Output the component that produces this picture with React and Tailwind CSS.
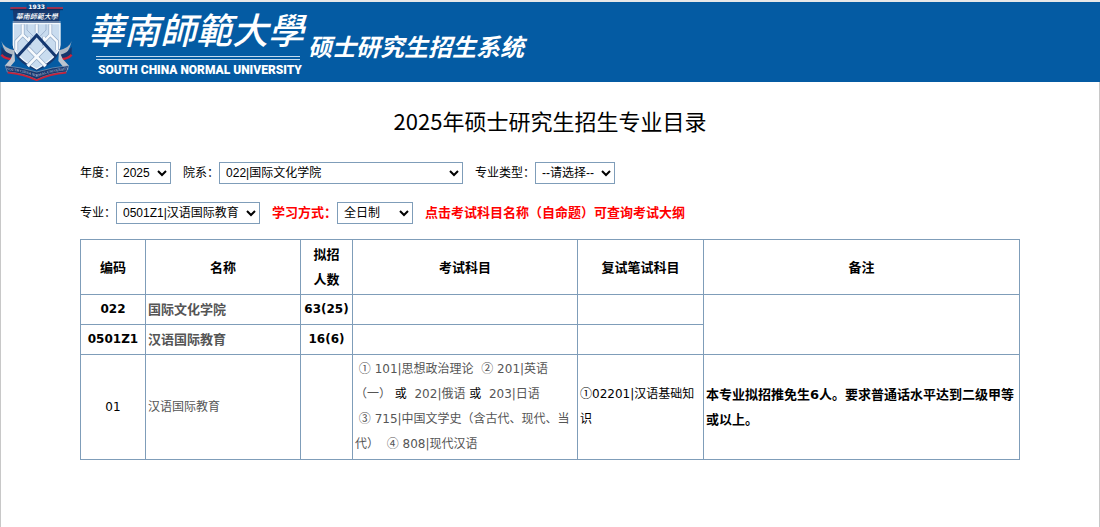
import { useState } from 'react';

const years = ['2025', '2024', '2023'];
const departments = ['022|国际文化学院'];
const majorTypes = ['--请选择--', '学术学位', '专业学位'];
const majors = ['0501Z1|汉语国际教育'];
const studyModes = ['全日制', '非全日制'];

const summaryRows = [
    { code: '022', name: '国际文化学院', quota: '63(25)' },
    { code: '0501Z1', name: '汉语国际教育', quota: '16(6)' },
];

const cell = 'border border-[#7f9db9] p-[2px]';

const Crest = () => (
    <svg viewBox="0 6 240 240" className="h-20 w-20 shrink-0" role="img" aria-label="校徽">
        <path d="M38 24 L181 24 L178 60 L181 140 Q178 185 110 212 Q42 185 38 140 L41 60 Z" fill="#173a70" />
        <path d="M31 24 H80 M140 24 H189" stroke="#c62a3e" strokeWidth="5" />
        <path d="M31 29 H189" stroke="#102c5c" strokeWidth="3" />
        <rect x="80" y="11" width="60" height="16" fill="#0d4c8c" />
        <text x="110" y="26" textAnchor="middle" fontSize="18" fontWeight="700" fill="#fff" fontFamily="DejaVu Sans, sans-serif">1933</text>
        <text x="110" y="57" textAnchor="middle" fontSize="21" fontStyle="italic" fontWeight="500" fill="#fff" fontFamily="Noto Sans CJK TC, sans-serif">華南師範大學</text>
        <path d="M38 66 H182" stroke="#c4d2e3" strokeWidth="3" />
        <path d="M40 71 H180 V135 Q178 168 110 207 Q42 168 40 135 Z" fill="#c9dcef" stroke="#f5f9fd" strokeWidth="4" />
        <g fill="none" strokeLinejoin="miter">
            <path d="M68 73 V104 L49 124 V150 M68 104 L88 124 V110 M110 73 V99 M151 73 V104 L132 124 V110 M151 104 L171 124 V150" stroke="#8fa7c5" strokeWidth="11" />
            <path d="M68 73 V104 L49 124 V150 M68 104 L88 124 V110 M110 73 V99 M151 73 V104 L132 124 V110 M151 104 L171 124 V150" stroke="#f7fafd" strokeWidth="7" />
            <path d="M81 73 V90 L99 108 M138 73 V90 L121 108" stroke="#9fb4d0" strokeWidth="3" />
            <path d="M53 169 L110 106 L167 169" stroke="#14376f" strokeWidth="9" />
            <path d="M84 144 L137 198 M136 144 L83 198" stroke="#8fa7c5" strokeWidth="12" />
            <path d="M84 144 L137 198 M136 144 L83 198" stroke="#f7fafd" strokeWidth="8" />
        </g>
        <path d="M4 123 Q10 143 43 151 L39 177 Q12 160 4 123 Z M215 123 Q209 143 177 151 L181 177 Q207 160 215 123 Z" fill="#aeb8c4" />
        <path d="M4 140 Q15 158 39 164 L34 181 Q12 178 4 164 Z M215 140 Q204 158 181 164 L186 181 Q207 178 215 164 Z" fill="#17376c" />
        <path d="M4 164 Q15 177 38 177 M215 164 Q204 177 182 177" stroke="#cb2138" strokeWidth="7" fill="none" />
        <path d="M14 197 L32 177 L43 151 L45 183 L28 203 Z M207 197 L188 177 L177 151 L175 183 L192 203 Z" fill="#bcc5cf" />
        <path d="M16 197 Q60 201 110 216 Q158 201 206 197 L199 216 Q150 219 110 239 Q70 219 22 216 Z" fill="#17376c" stroke="#8fa0b8" strokeWidth="2" />
        <path d="M23 218 Q70 222 110 241 Q150 222 199 218" fill="none" stroke="#c8233a" strokeWidth="5" />
        <path id="crest-ribbon" d="M20 210 Q65 214 110 231 Q155 214 203 210" fill="none" />
        <text fontSize="11" fill="#d5dce6" fontFamily="Liberation Serif, serif">
            <textPath href="#crest-ribbon">SOUTH CHINA NORMAL UNIVERSITY</textPath>
        </text>
    </svg>
);

const Field = ({ id, label, options, width, important }) => {
    const [value, setValue] = useState(options[0]);
    return (
        <div className="flex items-center">
            <label htmlFor={id} className={important ? 'text-[13px] font-bold text-[#f00]' : 'text-xs'}>{label}</label>
            <select
                id={id}
                value={value}
                onChange={e => setValue(e.target.value)}
                className={`${width} h-[22px] border border-[#7f9db9] bg-white pl-[2px] font-['Liberation_Sans','Noto_Sans_CJK_SC',sans-serif] text-xs`}
            >
                {options.map(option => <option key={option}>{option}</option>)}
            </select>
        </div>
    );
};

const Mark = ({ children }) => <span className="font-['Noto_Sans_CJK_SC',sans-serif] leading-none">{children}</span>;

const Subject = ({ mark, children }) => (
    <a href="#syllabus" className="text-[#555]">
        {mark && <><Mark>{mark}</Mark>{' '}</>}
        {children}
    </a>
);

const App = () => {
    return (
        <div className="flex min-h-screen flex-col bg-white font-['DejaVu_Sans','Noto_Sans_CJK_SC',sans-serif] text-xs text-black">
            <header className="flex border-t-2 border-[#e8e8e8] bg-[#045ba3] whitespace-nowrap text-white">
                <Crest />
                <div className="ml-2 flex w-[218px] shrink-0 flex-col">
                    <div className="h-[54px] font-['Noto_Sans_CJK_TC',sans-serif] text-4xl leading-[52px] font-medium italic">華南師範大學</div>
                    <div className="mr-[6px] ml-2 h-1 border-y border-[#c4dcf0]" />
                    <div className="ml-[10px] pt-[1px] font-['Roboto',sans-serif] text-xs leading-[18px] font-black">SOUTH CHINA NORMAL UNIVERSITY</div>
                </div>
                <div className="ml-[2px] pt-[26px] font-['Noto_Sans_CJK_SC',sans-serif] text-2xl leading-[36px] font-bold italic">硕士研究生招生系统</div>
            </header>
            <main className="grow border-x border-[#c8c8c8] px-[79px] pt-[22px]">
                <h1 className="text-center font-['Noto_Sans_CJK_SC',sans-serif] text-[22px] leading-[32px]">2025年硕士研究生招生专业目录</h1>
                <form className="pt-[17px]">
                    <div className="flex h-10 items-center gap-3">
                        <Field id="year" label="年度：" options={years} width="w-[55px]" />
                        <Field id="department" label="院系：" options={departments} width="w-[244px]" />
                        <Field id="majorType" label="专业类型：" options={majorTypes} width="w-20" />
                    </div>
                    <div className="flex h-10 items-center gap-3">
                        <Field id="major" label="专业：" options={majors} width="w-36" />
                        <Field id="studyMode" label="学习方式：" options={studyModes} width="w-[76px]" important />
                        <p className="text-[13px] font-bold text-[#f00]">点击考试科目名称（自命题）可查询考试大纲</p>
                    </div>
                </form>
                <table className="mt-[6px] w-full table-fixed border-collapse leading-[25px]">
                    <colgroup>
                        <col className="w-[65px]" />
                        <col className="w-[155px]" />
                        <col className="w-[52px]" />
                        <col className="w-[225px]" />
                        <col className="w-[126px]" />
                        <col />
                    </colgroup>
                    <thead>
                        <tr className="text-[13px]">
                            <th className={cell}>编码</th>
                            <th className={cell}>名称</th>
                            <th className={cell}>拟招<br />人数</th>
                            <th className={cell}>考试科目</th>
                            <th className={cell}>复试笔试科目</th>
                            <th className={cell}>备注</th>
                        </tr>
                    </thead>
                    <tbody>
                        {summaryRows.map((row, key) => (
                            <tr key={row.code} className="font-bold">
                                <td className={`${cell} text-center`}>{row.code}</td>
                                <td className={`${cell} text-[13px]`}><a href="#major" className="text-[#555]">{row.name}</a></td>
                                <td className={`${cell} text-center`}>{row.quota}</td>
                                <td className={cell}></td>
                                <td className={cell}></td>
                                {key === 0 && <td className={cell} rowSpan={2}></td>}
                            </tr>
                        ))}
                        <tr>
                            <td className={`${cell} text-center`}>01</td>
                            <td className={cell}><a href="#direction" className="text-[#555]">汉语国际教育</a></td>
                            <td className={cell}></td>
                            <td className={cell}>
                                &nbsp;<Subject mark="①">101|思想政治理论</Subject>
                                &nbsp; <Subject mark="②">201|英语（一）</Subject>
                                {' '}或&nbsp; <Subject>202|俄语</Subject>
                                {' '}或&nbsp; <Subject>203|日语</Subject>
                                <br />
                                &nbsp;<Subject mark="③">715|中国文学史（含古代、现代、当代）</Subject>
                                &nbsp; <Subject mark="④">808|现代汉语</Subject>
                            </td>
                            <td className={cell}><Mark>①</Mark>02201|汉语基础知识</td>
                            <td className={`${cell} text-[13px] font-bold`}>本专业拟招推免生6人。要求普通话水平达到二级甲等或以上。</td>
                        </tr>
                    </tbody>
                </table>
            </main>
        </div>
    );
};

export default App;
